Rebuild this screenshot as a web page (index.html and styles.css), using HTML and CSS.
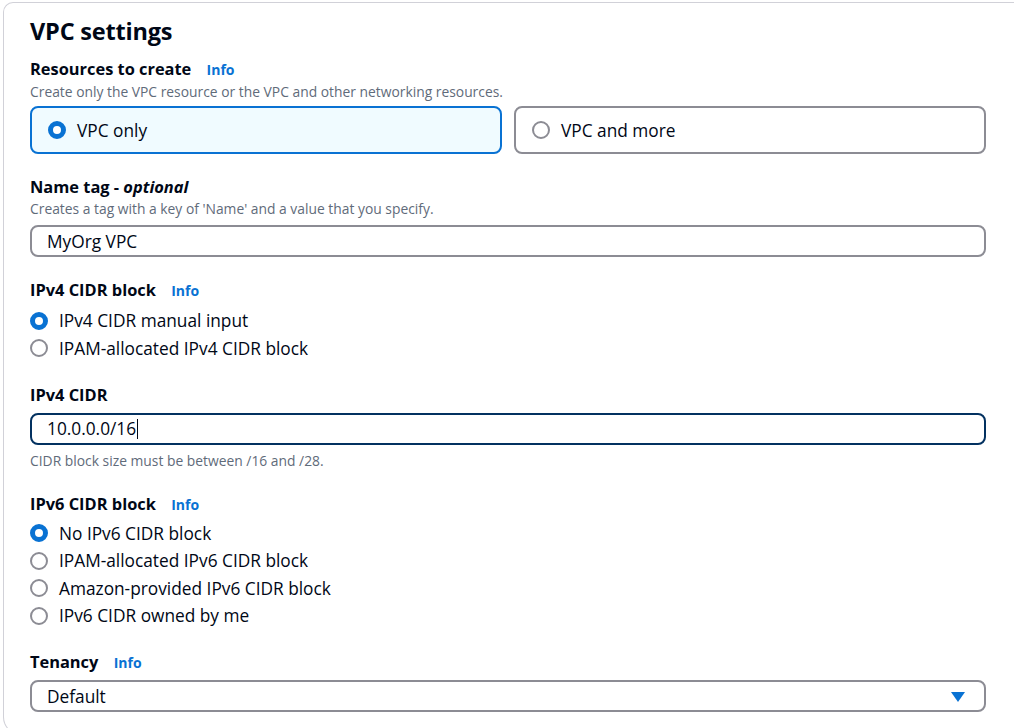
FILE: index.html
```html
<!DOCTYPE html>
<html lang="en">
<head>
<meta charset="utf-8">
<title>VPC settings</title>
<link rel="stylesheet" href="styles.css">
</head>
<body>
<div class="card">
  <h2 class="title">VPC settings</h2>

  <div class="field">
    <div class="label">Resources to create <a class="info">Info</a></div>
    <div class="desc">Create only the VPC resource or the VPC and other networking resources.</div>
    <div class="tiles">
      <div class="tile selected"><span class="radio on"></span><span>VPC only</span></div>
      <div class="tile"><span class="radio"></span><span>VPC and more</span></div>
    </div>
  </div>

  <div class="field">
    <div class="label">Name tag - <em>optional</em></div>
    <div class="desc">Creates a tag with a key of 'Name' and a value that you specify.</div>
    <div class="input">MyOrg VPC</div>
  </div>

  <div class="field">
    <div class="label">IPv4 CIDR block <a class="info">Info</a></div>
    <div class="radios">
      <div class="opt"><span class="radio on"></span>IPv4 CIDR manual input</div>
      <div class="opt"><span class="radio"></span>IPAM-allocated IPv4 CIDR block</div>
    </div>
  </div>

  <div class="field">
    <div class="label">IPv4 CIDR</div>
    <div class="input focus">10.0.0.0/16<span class="caret"></span></div>
    <div class="desc constraint">CIDR block size must be between /16 and /28.</div>
  </div>

  <div class="field">
    <div class="label">IPv6 CIDR block <a class="info">Info</a></div>
    <div class="radios six">
      <div class="opt"><span class="radio on"></span>No IPv6 CIDR block</div>
      <div class="opt"><span class="radio"></span>IPAM-allocated IPv6 CIDR block</div>
      <div class="opt"><span class="radio"></span>Amazon-provided IPv6 CIDR block</div>
      <div class="opt"><span class="radio"></span>IPv6 CIDR owned by me</div>
    </div>
  </div>

  <div class="field">
    <div class="label">Tenancy <a class="info">Info</a></div>
    <div class="input select">Default
      <svg class="arrow" width="14" height="10" viewBox="0 0 14 10"><path d="M0 0 H14 L7 10 Z" fill="#0972d3"/></svg>
    </div>
  </div>
</div>
</body>
</html>
```

FILE: styles.css
```css
html, body {
  margin: 0;
  padding: 0;
  background: #ffffff;
  overflow: hidden;
  height: 728px;
}
body {
  font-family: "Open Sans", "Noto Sans", sans-serif;
  color: #000716;
  font-size: 17.3px;
}
.card {
  margin-top: 2px;
  margin-left: 3px;
  width: 1011px;
  height: 733px;
  box-sizing: border-box;
  border-top: 1px solid #d1d1d8;
  border-left: 1px solid #d1d1d8;
  border-bottom: 1px solid #d1d1d8;
  border-top-left-radius: 10px;
  border-bottom-left-radius: 18px;
  padding: 13px 0 0 26px;
}
.card > * {
  width: 956px;
}
.title {
  margin: 0;
  font-size: 23.5px;
  line-height: 30px;
  font-weight: 700;
  letter-spacing: -0.2px;
}
.field {
  display: flex;
  flex-direction: column;
}
.label {
  font-size: 16.4px;
  line-height: 22px;
  font-weight: 700;
  margin-top: 12px;
}
.field + .field .label { margin-top: 22px; }
.label em { font-style: italic; }
.info {
  color: #0972d3;
  font-size: 14px;
  font-weight: 700;
  margin-left: 11px;
}
.desc {
  font-size: 13.85px;
  line-height: 20px;
  color: #5f6b7a;
  margin-top: 1px;
}
.tiles {
  display: grid;
  grid-template-columns: 1fr 1fr;
  gap: 12px;
  margin-top: 4px;
}
.tile {
  height: 48px;
  box-sizing: border-box;
  border: 2px solid #8c8c94;
  border-radius: 8px;
  display: flex;
  align-items: center;
  padding-left: 16px;
  gap: 11px;
  font-size: 17.3px;
}
.tile.selected {
  border-color: #0972d3;
  background: #f0fbff;
}
.radio {
  width: 18px;
  height: 18px;
  box-sizing: border-box;
  border-radius: 50%;
  border: 2px solid #8c8c94;
  flex: none;
  background: #fff;
}
.radio.on {
  border: 5.5px solid #0972d3;
}
.input {
  height: 32px;
  box-sizing: border-box;
  border: 2px solid #8c8c94;
  border-radius: 8px;
  margin-top: 6px;
  display: flex;
  align-items: center;
  padding-left: 15px;
  font-size: 17.3px;
  position: relative;
}
.input.focus {
  border-color: #033160;
  margin-top: 7px;
}
.caret {
  display: inline-block;
  width: 1px;
  height: 20px;
  background: #000716;
  margin-left: 1px;
}
.constraint { margin-top: 6px; }
.select { margin-top: 6px; }
.arrow {
  position: absolute;
  right: 19px;
  top: 10px;
}
.radios {
  margin-top: 5px;
  display: flex;
  flex-direction: column;
}
.radios.six { margin-top: 4px; }
.opt {
  height: 27.4px;
  display: flex;
  align-items: center;
  gap: 11px;
  font-size: 17.3px;
}
```
